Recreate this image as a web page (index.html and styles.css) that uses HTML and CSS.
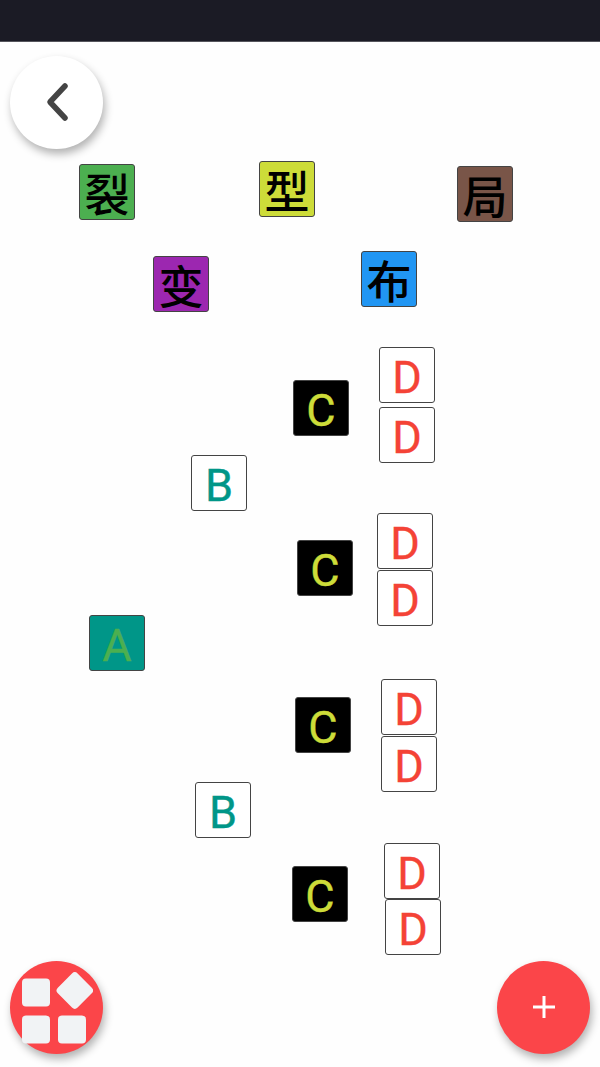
FILE: index.html
```html
<!DOCTYPE html>
<html lang="zh">
<head>
    <meta charset="UTF-8">
    <meta name="viewport" content="width=device-width, initial-scale=1.0">
    <title>裂变布局</title>
    <link rel="stylesheet" href="styles.css">
</head>
<body>
    <div class="topbar"></div>
    <div class="canvas">
        <button class="fab back">
            <svg width="28" height="42" viewBox="0 0 28 42"><path d="M22 4 L7 20 L22 36" fill="none" stroke="#444" stroke-width="5.5" stroke-linecap="round" stroke-linejoin="round"/></svg>
        </button>

        <!-- toolbar nodes -->
        <div class="node cjk green t1">裂</div>
        <div class="node cjk lime t2">型</div>
        <div class="node cjk brown t3">局</div>
        <div class="node cjk purple t4">变</div>
        <div class="node cjk blue t5">布</div>

        <!-- tree -->
        <div class="node root a1">A</div>
        <div class="node mid b1">B</div>
        <div class="node mid b2">B</div>
        <div class="node dark c1">C</div>
        <div class="node dark c2">C</div>
        <div class="node dark c3">C</div>
        <div class="node dark c4">C</div>
        <div class="node leaf d1">D</div>
        <div class="node leaf d2">D</div>
        <div class="node leaf d3">D</div>
        <div class="node leaf d4">D</div>
        <div class="node leaf d5">D</div>
        <div class="node leaf d6">D</div>
        <div class="node leaf d7">D</div>
        <div class="node leaf d8">D</div>

        <button class="fab red layouts">
            <svg width="72" height="72" viewBox="0 0 72 72" fill="#f1f3f5">
                <rect x="1" y="6.5" width="28" height="28" rx="4"/>
                <rect x="39.8" y="4.5" width="28" height="28" rx="4" transform="rotate(45 53.8 18.5)"/>
                <rect x="1" y="43.5" width="28" height="28" rx="4"/>
                <rect x="37" y="43.5" width="28" height="28" rx="4"/>
            </svg>
        </button>
        <button class="fab red add">
            <svg class="plus" width="24" height="24" viewBox="0 0 24 24"><path d="M12 1 V23 M1 12 H23" fill="none" stroke="#fff" stroke-width="3"/></svg>
        </button>
    </div>
</body>
</html>
```

FILE: styles.css
```css
html, body {
    margin: 0;
    padding: 0;
}
body {
    width: 600px;
    height: 1067px;
    overflow: hidden;
    background-color: #fefefe;
    font-family: Roboto, "Noto Sans CJK SC", sans-serif;
}
.topbar {
    height: 42px;
    background-color: #1b1b25;
    border-bottom: 1px solid #55555c;
    box-sizing: border-box;
}
.canvas {
    position: relative;
    height: 1025px;
}

/* round buttons */
.fab {
    position: absolute;
    width: 93px;
    height: 93px;
    padding: 0;
    border: none;
    border-radius: 50%;
    display: flex;
    align-items: center;
    justify-content: center;
    box-shadow: 2px 5px 9px rgba(0,0,0,0.3);
}
.back {
    left: 10px;
    top: 14px;
    background-color: #fff;
}
.red {
    background-color: #fb4549;
}
.layouts {
    left: 10px;
    top: 919px;
}
.add {
    left: 497px;
    top: 919px;
}
.plus {
    margin-bottom: 2px;
}

/* nodes */
.node {
    position: absolute;
    box-sizing: border-box;
    width: 56px;
    height: 56px;
    padding-top: 4px;
    border: 1px solid #444;
    border-radius: 3px;
    display: flex;
    align-items: center;
    justify-content: center;
    font-size: 45px;
    line-height: 1;
    -webkit-text-stroke: 0.4px currentColor;
}
.cjk {
    padding-top: 0;
    font-family: "Noto Sans CJK SC", sans-serif;
    font-size: 45px;
    font-weight: 500;
    color: #000;
    -webkit-text-stroke: 0;
}
.green { background-color: #4caf50; }
.lime { background-color: #cddc39; }
.brown { background-color: #795548; }
.purple { background-color: #9c27b0; }
.blue { background-color: #2196f3; }
.root {
    background-color: #009688;
    color: #4caf50;
}
.mid {
    background-color: #fff;
    color: #009688;
}
.dark {
    background-color: #000;
    color: #cddc39;
}
.leaf {
    background-color: #fff;
    color: #f44336;
}

.t1 { left: 79px; top: 122px; }
.t2 { left: 259px; top: 119px; }
.t3 { left: 457px; top: 124px; }
.t4 { left: 153px; top: 214px; }
.t5 { left: 361px; top: 209px; }

.a1 { left: 89px; top: 573px; }
.b1 { left: 191px; top: 413px; }
.b2 { left: 195px; top: 740px; }
.c1 { left: 293px; top: 338px; }
.c2 { left: 297px; top: 498px; }
.c3 { left: 295px; top: 655px; }
.c4 { left: 292px; top: 824px; }
.d1 { left: 379px; top: 305px; }
.d2 { left: 379px; top: 365px; }
.d3 { left: 377px; top: 471px; }
.d4 { left: 377px; top: 528px; }
.d5 { left: 381px; top: 637px; }
.d6 { left: 381px; top: 694px; }
.d7 { left: 384px; top: 801px; }
.d8 { left: 385px; top: 857px; }
```
